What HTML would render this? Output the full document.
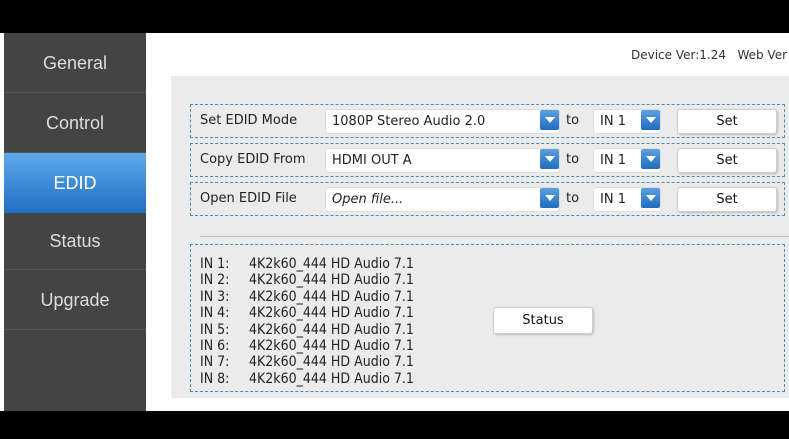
<!DOCTYPE html>
<html><head><style>
*{margin:0;padding:0;box-sizing:border-box}
body{width:789px;height:439px;background:#000;position:relative;overflow:hidden;font-family:"DejaVu Sans","Liberation Sans",sans-serif;}
.a{position:absolute}
.side{left:4px;top:33px;width:142px;height:378px;background:#444}
.it{position:absolute;left:0;width:142px;height:60px;color:#ddd;font-size:18px;text-align:center;line-height:60px;border-bottom:1px solid #555;font-family:"Liberation Sans",sans-serif}
.row{position:absolute;left:190px;width:595px;border:1px dashed #4a8ab8;height:34px}
.lab{position:absolute;left:9px;top:8px;font-size:13px;color:#222}
.sel{position:absolute;top:4px;height:25px;background:#fff;border:1px solid #ddd;border-radius:3px;font-size:13px;color:#222;padding:4px 6px}
.arr{position:absolute;top:5px;width:19px;height:20px;background:linear-gradient(#5da0e0,#1f6cc0);border-radius:2px}
.arr:after{content:"";position:absolute;left:5px;top:7px;border-left:5px solid transparent;border-right:5px solid transparent;border-top:6px solid #fff}
.to{position:absolute;left:375px;top:8px;font-size:13px;color:#222}
.btn{position:absolute;background:#fff;border:1px solid #ccc;border-radius:3px;box-shadow:1px 1px 2px #bbb;font-size:13px;text-align:center;color:#111}
.st{position:absolute;left:9px;font-size:14px;color:#222;font-family:"DejaVu Sans Condensed","Liberation Sans Narrow",sans-serif;white-space:nowrap;line-height:16.4px}
.st span{display:inline-block;width:49px}
</style></head><body>
<div class="a" style="left:0;top:33px;width:789px;height:378px;background:#fff"></div>
<div class="a side">
<div class="it" style="top:0">General</div>
<div class="it" style="top:60px">Control</div>
<div class="it" style="top:120px;background:linear-gradient(#5fa8ea,#1f6fc2);color:#fff;border:none">EDID</div>
<div class="it" style="top:179px;line-height:58px;height:58px">Status</div>
<div class="it" style="top:237px">Upgrade</div>
</div>
<div class="a" style="left:631px;top:48px;font-size:12px;color:#333;white-space:nowrap">Device Ver:1.24 &nbsp;&nbsp;Web Ver</div>
<div class="a" style="left:171px;top:76px;width:618px;height:322px;background:#ebebeb"></div>

<div class="row" style="top:104px"><div class="lab">Set EDID Mode</div>
<div class="sel" style="left:134px;width:235px">1080P Stereo Audio 2.0</div><div class="arr" style="left:349px"></div>
<div class="to">to</div><div class="sel" style="left:402px;width:68px">IN 1</div><div class="arr" style="left:450px"></div>
<div class="btn" style="left:486px;top:4px;width:100px;height:25px;line-height:23px">Set</div></div>

<div class="row" style="top:143px"><div class="lab">Copy EDID From</div>
<div class="sel" style="left:134px;width:235px">HDMI OUT A</div><div class="arr" style="left:349px"></div>
<div class="to">to</div><div class="sel" style="left:402px;width:68px">IN 1</div><div class="arr" style="left:450px"></div>
<div class="btn" style="left:486px;top:4px;width:100px;height:25px;line-height:23px">Set</div></div>

<div class="row" style="top:182px"><div class="lab">Open EDID File</div>
<div class="sel" style="left:134px;width:235px;font-style:italic">Open file...</div><div class="arr" style="left:349px"></div>
<div class="to">to</div><div class="sel" style="left:402px;width:68px">IN 1</div><div class="arr" style="left:450px"></div>
<div class="btn" style="left:486px;top:4px;width:100px;height:25px;line-height:23px">Set</div></div>

<div class="a" style="left:200px;top:236px;width:589px;height:1px;background:#bbb"></div>
<div class="row" style="top:244px;height:148px">
<div class="st" style="top:11px">
<div><span>IN 1:</span>4K2k60_444 HD Audio 7.1</div>
<div><span>IN 2:</span>4K2k60_444 HD Audio 7.1</div>
<div><span>IN 3:</span>4K2k60_444 HD Audio 7.1</div>
<div><span>IN 4:</span>4K2k60_444 HD Audio 7.1</div>
<div><span>IN 5:</span>4K2k60_444 HD Audio 7.1</div>
<div><span>IN 6:</span>4K2k60_444 HD Audio 7.1</div>
<div><span>IN 7:</span>4K2k60_444 HD Audio 7.1</div>
<div><span>IN 8:</span>4K2k60_444 HD Audio 7.1</div>
</div>
<div class="btn" style="left:302px;top:62px;width:100px;height:27px;line-height:25px">Status</div>
</div>
</body></html>
